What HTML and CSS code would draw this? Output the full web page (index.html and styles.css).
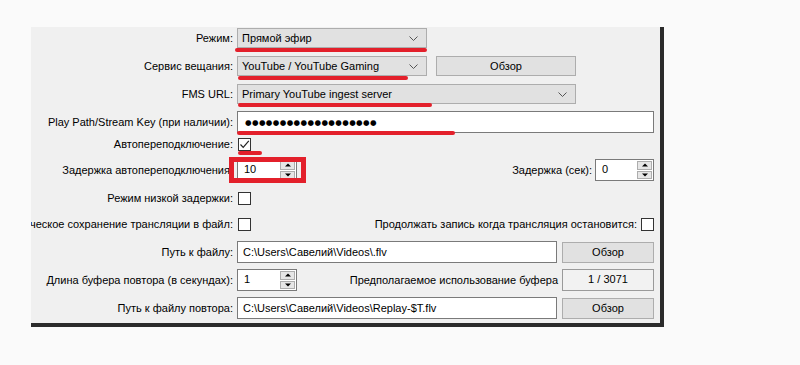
FILE: index.html
```html
<!DOCTYPE html>
<html lang="ru">
<head>
  <meta charset="UTF-8" />
  <title>Настройки трансляции</title>
  <link rel="stylesheet" href="styles.css">
</head>
<body>

  <div class="panel">

    <!-- Режим -->
    <div class="row">
      <div class="label">Режим:</div>
      <div class="combo combo-short"><span>Прямой эфир</span><svg class="chev" width="9" height="5" viewBox="0 0 9 5"><path d="M0.5 0.5 L4.5 4.5 L8.5 0.5" fill="none" stroke="#555" stroke-width="1"/></svg></div>
      <span class="mark mark-1"></span>
    </div>

    <!-- Сервис -->
    <div class="row">
      <div class="label">Сервис вещания:</div>
      <div class="combo combo-short"><span>YouTube / YouTube Gaming</span><svg class="chev" width="9" height="5" viewBox="0 0 9 5"><path d="M0.5 0.5 L4.5 4.5 L8.5 0.5" fill="none" stroke="#555" stroke-width="1"/></svg></div>
      <button class="btn btn-wide">Обзор</button>
      <span class="mark mark-2"></span>
    </div>

    <!-- FMS URL -->
    <div class="row">
      <div class="label">FMS URL:</div>
      <div class="combo combo-long"><span>Primary YouTube ingest server</span><svg class="chev" width="9" height="5" viewBox="0 0 9 5"><path d="M0.5 0.5 L4.5 4.5 L8.5 0.5" fill="none" stroke="#555" stroke-width="1"/></svg></div>
      <span class="mark mark-3"></span>
    </div>

    <!-- Stream key -->
    <div class="row">
      <div class="label">Play Path/Stream Key (при наличии):</div>
      <div class="field grow dots">●●●●●●●●●●●●●●●●●●●</div>
      <span class="mark mark-4"></span>
    </div>

    <!-- Автопереподключение -->
    <div class="row snug">
      <div class="label">Автопереподключение:</div>
      <div class="check"><svg width="11" height="11" viewBox="0 0 11 11"><path d="M1.5 5.5 L4.2 8.3 L9.8 1.8" fill="none" stroke="#222" stroke-width="1.2"/></svg></div>
      <span class="mark mark-5"></span>
    </div>

    <!-- Задержка -->
    <div class="row close">
      <div class="label">Задержка автопереподключения:</div>
      <div class="spin">
        <div class="spin-value">10</div>
        <div class="spin-arrows"><span class="up"></span><span class="down"></span></div>
      </div>
      <div class="spacer"></div>
      <div class="side-label">Задержка (сек):</div>
      <div class="spin spin-small">
        <div class="spin-value">0</div>
        <div class="spin-arrows"><span class="up"></span><span class="down"></span></div>
      </div>
      <span class="mark-box"></span>
    </div>

    <!-- Низкая задержка -->
    <div class="row">
      <div class="label">Режим низкой задержки:</div>
      <div class="check"></div>
    </div>

    <!-- Сохранение -->
    <div class="row close">
      <div class="label">Автоматическое сохранение трансляции в файл:</div>
      <div class="check"></div>
      <div class="spacer"></div>
      <div class="side-label">Продолжать запись когда трансляция остановится:</div>
      <div class="check"></div>
    </div>

    <!-- Путь -->
    <div class="row">
      <div class="label">Путь к файлу:</div>
      <div class="field grow">C:\Users\Савелий\Videos\.flv</div>
      <button class="btn">Обзор</button>
    </div>

    <!-- Буфер -->
    <div class="row">
      <div class="label">Длина буфера повтора (в секундах):</div>
      <div class="spin">
        <div class="spin-value">1</div>
        <div class="spin-arrows"><span class="up"></span><span class="down"></span></div>
      </div>
      <div class="spacer"></div>
      <div class="side-label">Предполагаемое использование буфера</div>
      <div class="readout">1 / 3071</div>
    </div>

    <!-- Путь повтора -->
    <div class="row">
      <div class="label">Путь к файлу повтора:</div>
      <div class="field grow">C:\Users\Савелий\Videos\Replay-$T.flv</div>
      <button class="btn">Обзор</button>
    </div>

  </div>

</body>
</html>
```

FILE: styles.css
```css
* {
  box-sizing: border-box;
  margin: 0;
  padding: 0;
}

body {
  background: #fafafa;
  font-family: "Liberation Sans", Arial, sans-serif;
  font-size: 11px;
  color: #000;
}

.panel {
  margin: 27px 0 0 31px;
  width: 633px;
  background: #f0f0f0;
  border-right: 4px solid #2b2b2b;
  border-bottom: 4px solid #2b2b2b;
  padding: 0 6px 4px 0;
}

.row {
  position: relative;
  display: flex;
  align-items: center;
  height: 22px;
}

.row + .row { margin-top: 6px; }
.row.snug { margin-top: 0; }
.row.close { margin-top: 4px; }

.label {
  width: 202px;
  flex: none;
  display: flex;
  justify-content: flex-end;
  overflow: hidden;
  white-space: nowrap;
  margin-right: 4px;
}

.spacer { flex: 1; }

.side-label {
  white-space: nowrap;
  margin-right: 3px;
}

/* combo boxes */
.combo {
  height: 20px;
  background: #e1e1e1;
  border: 1px solid #adadad;
  display: flex;
  align-items: center;
  justify-content: space-between;
  padding: 0 8px 0 4px;
  flex: none;
}

.combo-short { width: 190px; }
.combo-long { width: 339px; }

.chev { flex: none; }

/* buttons */
.btn {
  height: 21px;
  width: 92px;
  flex: none;
  background: #e1e1e1;
  border: 1px solid #adadad;
  font: inherit;
  color: #000;
  margin-left: 5px;
}

.btn-wide {
  width: 140px;
  height: 20px;
  margin-left: 9px;
}

/* text fields */
.field {
  height: 22px;
  background: #fff;
  border: 1px solid #7a7a7a;
  display: flex;
  align-items: center;
  padding: 0 5px;
  white-space: nowrap;
}

.grow { flex: 1; }

.dots {
  font-family: "DejaVu Sans", sans-serif;
  font-size: 7.5px;
  letter-spacing: 0.4px;
  padding-left: 7px;
}

/* checkbox */
.check {
  width: 13px;
  height: 13px;
  flex: none;
  background: #fff;
  border: 1px solid #333;
  display: flex;
  align-items: center;
  justify-content: center;
  margin-left: 1px;
}

/* spin box */
.spin {
  width: 60px;
  height: 22px;
  flex: none;
  display: flex;
  background: #fff;
  border: 1px solid #7a7a7a;
}

.spin-small { width: 59px; }

.spin-value {
  flex: 1;
  padding: 3px 0 0 6px;
}

.spin-arrows {
  width: 16px;
  display: flex;
  flex-direction: column;
  gap: 1px;
  padding: 1px 1px 1px 0;
  background: #fff;
}

.spin-arrows span {
  flex: 1;
  background: #e6e6e6;
  border: 1px solid #adadad;
  position: relative;
}

.spin-arrows span::after {
  content: "";
  position: absolute;
  left: 50%;
  top: 50%;
  transform: translate(-50%, -50%);
  border-left: 3px solid transparent;
  border-right: 3px solid transparent;
}

.spin-arrows .up::after { border-bottom: 3px solid #000; }
.spin-arrows .down::after { border-top: 3px solid #000; }

.readout {
  width: 92px;
  height: 22px;
  flex: none;
  background: #f2f2f2;
  border: 1px solid #9a9a9a;
  text-align: center;
  padding-top: 3px;
  margin-left: 1px;
}

/* red annotations drawn over the screenshot */
.mark {
  position: absolute;
  height: 4px;
  background: #e3202b;
  border-radius: 2px;
}

.mark-1 { left: 204px; top: 21px; width: 192px; }
.mark-2 { left: 207px; top: 21px; width: 170px; }
.mark-3 { left: 207px; top: 20px; width: 194px; }
.mark-4 { left: 206px; top: 20px; width: 218px; }
.mark-5 { left: 207px; top: 18px; width: 24px; }

.mark-box {
  position: absolute;
  left: 198px;
  top: -2px;
  width: 77px;
  height: 26px;
  border: 5px solid #e3202b;
}
```
